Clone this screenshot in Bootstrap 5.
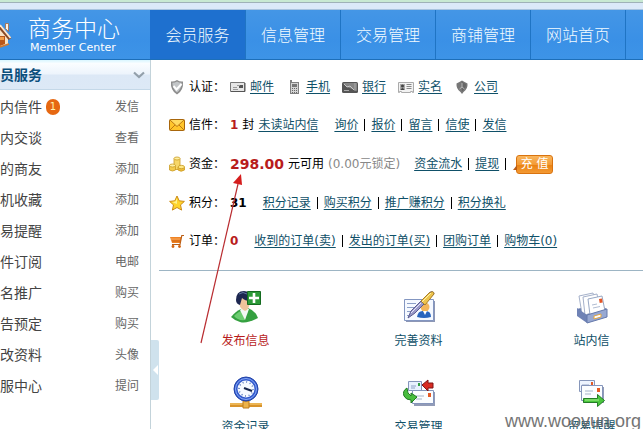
<!DOCTYPE html>
<html lang="zh-CN">
<head>
<meta charset="utf-8">
<meta name="viewport" content="width=device-width, initial-scale=1">
<title>商务中心</title>
<link rel="stylesheet" href="https://cdn.jsdelivr.net/npm/bootstrap@5.3.0/dist/css/bootstrap.min.css">
<style>
body{font-family:"DejaVu Sans","Noto Sans CJK SC",sans-serif;font-size:12px;line-height:18px;color:#000;background:#fff;height:100vh;overflow:hidden}
svg{display:block;flex:none}
.chrome-strip{height:10px;background:#dbe9f9;border-top:2px solid #c8e9d3;border-bottom:1px solid #a9c4df;box-shadow:inset 0 1px #9fb1b8}
.topbar{height:50px;background:linear-gradient(#4496e6,#3a90e6 60%,#3d94e7);border-bottom:1px solid #1d6fb9}
.brand{width:150px;color:#fff}
.brand:hover{color:#fff}
.brand-name{font-size:23px;line-height:26px;font-weight:300}
.brand-sub{font-size:11px;line-height:12px;padding-left:2px}
.topbar .nav-link{font-size:16px;line-height:24px;color:#f2fbff;width:95px;padding:2px 0 0;border-right:1px solid #1f74c4;display:flex;align-items:center;justify-content:center;font-weight:300}
.topbar .nav-link.active{width:96px;background:#1e70cf}
.side{width:151px;border-right:1px solid #c3d3da}
.side-head{height:30px;background:linear-gradient(#d9f6ff,#fafdff 12%,#edf4fc 48%,#dce8f6 52%,#dde9f6);border-bottom:1px solid #c4d8e8;color:#0b4f7c;font-size:14px;font-weight:700}
.side-head button{border:0;background:none;padding:0}
.side-list{padding-top:1px}
.side-item{height:31px;padding-right:11px}
.side-item a{color:#444;text-decoration:none;font-size:14px}
.side-item .act{color:#666;font-size:12px}
.count{background:#e66812;color:#fff3b0;font-size:10px;line-height:16px;width:14px;border-radius:7px;text-align:center;margin-left:4px}
.rail{width:8px}
.rail button{width:8px;height:60px;margin-top:280px;padding:0;border:0;background:#cfe2ed;border-radius:0 2px 2px 0}
.stats{height:210px;padding:8px 0 10px 10px}
.stat-label{width:41px;margin-left:4px}
.stats a,.tile{color:#0f5068}
.stats a{text-decoration:underline;text-underline-offset:2px}
.certs{gap:12px}
.bar{width:1px;height:12px;background:#000;margin:0 6px}
.num{color:#b81c1c;font-weight:700}
.sum{font-size:14px}
.locked{color:#888;margin-right:14px}
.recharge{position:relative;height:19px;width:37px;padding:0;border:1px solid #d9730f;border-radius:3px;background:linear-gradient(#f9b65d,#f39a35 50%,#ea800f 51%,#f39a35);color:#fff;font-size:12px;line-height:17px;margin-left:4px}
.recharge::before{content:"";position:absolute;left:-4px;bottom:3px;border-left:4px solid transparent;border-bottom:5px solid #b95b17}
.tiles{border-top:1px solid #9db5c4;padding-top:19px;display:grid;grid-template-columns:repeat(3,1fr);row-gap:26px;margin-right:-35px}
.tile{height:60px;text-decoration:none;display:flex;flex-direction:column;align-items:center;justify-content:space-between}
.tile svg{margin-bottom:8px}
.tile.hot{color:#b81c1c}
.pointer{position:absolute;left:196px;top:170px;pointer-events:none}
.watermark{position:absolute;right:2px;bottom:-3px;font:18px/22px "Liberation Sans",sans-serif;color:#666;opacity:.9}
</style>
<script src="https://cdn.jsdelivr.net/npm/bootstrap@5.3.0/dist/js/bootstrap.bundle.min.js"></script>
</head>
<body class="position-relative d-flex flex-column">
<div class="chrome-strip flex-shrink-0"></div>
<header class="topbar d-flex flex-shrink-0">
  <a href="#" class="brand d-flex align-items-center text-decoration-none flex-shrink-0">
    <svg width="12" height="26" viewBox="0 0 12 26"><path d="M0 4l8 11v7l-8 3z" fill="#f9e3c4"/><path d="M5.500 1.500h3v8l-3-3z" fill="#fbf3e8" stroke="#a9683c" stroke-width=".8"/><path d="M0 5l10 12" stroke="#8a4a24" stroke-width="3.500"/><path d="M0 3l10.500 13" stroke="#ffe9cf" stroke-width="1.800"/><path d="M0 14h5v8l-5 2z" fill="#b9571a"/><path d="M0 15h4v3H0z" fill="#f2a04a"/><path d="M0 25l9-3" stroke="#cc7a36" stroke-width="1.800"/></svg>
    <span class="d-flex flex-column ps-3"><span class="brand-name">商务中心</span><span class="brand-sub">Member Center</span></span>
  </a>
  <nav class="nav flex-nowrap">
    <a class="nav-link active" href="#" aria-current="page">会员服务</a>
    <a class="nav-link" href="#">信息管理</a>
    <a class="nav-link" href="#">交易管理</a>
    <a class="nav-link" href="#">商铺管理</a>
    <a class="nav-link" href="#">网站首页</a>
  </nav>
</header>
<div class="d-flex flex-grow-1">
  <aside class="side flex-shrink-0">
    <div class="side-head d-flex align-items-center justify-content-between pe-1"><span>员服务</span>
      <button type="button" aria-label="收起"><svg width="14" height="8" viewBox="0 0 14 8"><path d="M2 1.500l5 4.500 5-4.500" fill="none" stroke="#93a0ab" stroke-width="2.200"/></svg></button></div>
    <ul class="side-list list-unstyled m-0">
      <li class="side-item d-flex align-items-center"><a href="#">内信件</a><span class="count">1</span><a class="act ms-auto" href="#">发信</a></li>
      <li class="side-item d-flex align-items-center"><a href="#">内交谈</a><a class="act ms-auto" href="#">查看</a></li>
      <li class="side-item d-flex align-items-center"><a href="#">的商友</a><a class="act ms-auto" href="#">添加</a></li>
      <li class="side-item d-flex align-items-center"><a href="#">机收藏</a><a class="act ms-auto" href="#">添加</a></li>
      <li class="side-item d-flex align-items-center"><a href="#">易提醒</a><a class="act ms-auto" href="#">添加</a></li>
      <li class="side-item d-flex align-items-center"><a href="#">件订阅</a><a class="act ms-auto" href="#">电邮</a></li>
      <li class="side-item d-flex align-items-center"><a href="#">名推广</a><a class="act ms-auto" href="#">购买</a></li>
      <li class="side-item d-flex align-items-center"><a href="#">告预定</a><a class="act ms-auto" href="#">购买</a></li>
      <li class="side-item d-flex align-items-center"><a href="#">改资料</a><a class="act ms-auto" href="#">头像</a></li>
      <li class="side-item d-flex align-items-center"><a href="#">服中心</a><a class="act ms-auto" href="#">提问</a></li>
    </ul>
  </aside>
  <div class="rail flex-shrink-0"><button type="button" aria-label="收起侧栏"><svg width="8" height="10" viewBox="0 0 8 10"><path d="M7 0v10L2 5z" fill="#fff"/></svg></button></div>
  <main class="flex-grow-1 overflow-hidden">
    <section class="stats d-flex flex-column text-nowrap">
      <div class="flex-fill d-flex align-items-center">
        <svg width="16" height="16" viewBox="0 0 16 16"><path d="M8 1q3 2 6 1.500.8 9-6 13Q1.200 11.500 2 2.500 5 3 8 1z" fill="#8c8c8c"/><path d="M8 2.500q2 1.200 4.700 1.200Q12.500 10 8 13.500 3.500 10 3.300 3.700 6 3.700 8 2.500z" fill="#c2c5c7"/><path d="M4.500 7l3 3.500L12.500 5" fill="none" stroke="#fff" stroke-width="2"/></svg>
        <span class="stat-label">认证：</span>
        <div class="certs d-flex">
          <span class="d-flex align-items-center gap-1"><svg width="16" height="16" viewBox="0 0 16 16"><path d="M.5 3.500h14v9H.5z" fill="#e6e6e6" stroke="#777"/><path d="M1 12.500h14V4" fill="none" stroke="#555"/><path d="M3 8.500h4M3 10.500h5" stroke="#999"/><path d="M9 6h4v3H9z" fill="#555"/><path d="M7 6.500h3" stroke="#999"/></svg><a href="#">邮件</a></span>
          <span class="d-flex align-items-center gap-1"><svg width="16" height="16" viewBox="0 0 16 16"><path d="M4 1h2v2h7v12H4z" fill="#808080"/><path d="M5 4h7v10H5z" fill="#d4d4d4"/><path d="M6 5h5v3H6z" fill="#777"/><path d="M6 9.500h5M6 11.500h5M6 13.500h5" stroke="#666" stroke-dasharray="1 1"/></svg><a href="#">手机</a></span>
          <span class="d-flex align-items-center gap-1"><svg width="16" height="16" viewBox="0 0 16 16"><rect y="3" width="16" height="11" rx="1.500" fill="#555"/><path d="M1 4h14v8L5 8z" fill="#858585"/><path d="M2 5l3 3 3-1 4 4" fill="none" stroke="#c8c8c8"/><path d="M2 11.500h5M13 4v8" stroke="#aaa"/></svg><a href="#">银行</a></span>
          <span class="d-flex align-items-center gap-1"><svg width="16" height="16" viewBox="0 0 16 16"><path d="M.5 3.500h15v10h-1v-1h-2v1h-9v-1h-2v1h-1z" fill="#f2f2f2" stroke="#aaa"/><path d="M2 5h5v6H2z" fill="#aaa"/><circle cx="4.500" cy="7" r="1.500" fill="#444"/><path d="M2.500 11q2-4 4 0z" fill="#444"/><path d="M8.500 5.500h5M8.500 7.500h5M8.500 9.500h5" stroke="#888"/></svg><a href="#">实名</a></span>
          <span class="d-flex align-items-center gap-1"><svg width="16" height="16" viewBox="0 0 16 16"><path d="M8 1.500q2.500 1.500 5.500 3Q14 10 9.500 13L8 15l-1.500-2Q2 10 2.500 4.500 5.500 3 8 1.500z" fill="#777"/><path d="M8 3q2 1 4 2 0 4-3.500 7H8z" fill="#666"/><path d="M8 4v4L5.500 10M8 8l2.500 2" fill="none" stroke="#b5b5b5"/></svg><a href="#">公司</a></span>
        </div>
      </div>
      <div class="flex-fill d-flex align-items-center">
        <svg width="16" height="16" viewBox="0 0 16 16"><rect x=".5" y="2.500" width="15" height="11" rx="1" fill="#ffc52b" stroke="#a8660c"/><path d="M1 13l5.500-5.500M15 13L9.500 7.500" stroke="#bd780f"/><path d="M1 3l7 6.500L15 3" fill="#ffdb61" stroke="#bd780f"/></svg>
        <span class="stat-label">信件：</span>
        <span class="num">1</span><span class="ps-1 pe-1">封</span><a href="#" class="me-3">未读站内信</a>
        <a href="#">询价</a><i class="bar"></i><a href="#">报价</a><i class="bar"></i><a href="#">留言</a><i class="bar"></i><a href="#">信使</a><i class="bar"></i><a href="#">发信</a>
      </div>
      <div class="flex-fill d-flex align-items-center">
        <svg width="16" height="16" viewBox="0 0 16 16"><g stroke="#c99a25" stroke-width=".8"><path d="M5 2.500v11h6v-11z" fill="#f7d768"/><ellipse cx="8" cy="2.500" rx="3" ry="1.500" fill="#fff0a0"/><path d="M.5 9.500v4.500q3 2 6 0V9.500z" fill="#f4cb4c"/><ellipse cx="3.500" cy="9.500" rx="3" ry="1.500" fill="#fff0a0"/><path d="M9 11v3q3 2.500 6.500 0v-3z" fill="#efbd38"/><ellipse cx="12.300" cy="11" rx="3.200" ry="1.700" fill="#ffe884"/></g></svg>
        <span class="stat-label">资金：</span>
        <span class="num sum">298.00</span><span class="ps-1 pe-1">元可用</span><span class="locked">(0.00元锁定)</span>
        <a href="#">资金流水</a><i class="bar"></i><a href="#">提现</a><i class="bar"></i><button type="button" class="recharge">充 值</button>
      </div>
      <div class="flex-fill d-flex align-items-center">
        <svg width="16" height="16" viewBox="0 0 16 16"><path d="M8 1l2.200 4.800 5.200.6-3.900 3.500 1.100 5.200L8 12.500l-4.600 2.600 1.100-5.200L.6 6.400l5.200-.6z" fill="#ffd42b" stroke="#cc8a16"/><path d="M8 3v6L3 7l3.500-.5z" fill="#fff18c"/></svg>
        <span class="stat-label">积分：</span>
        <b class="me-3">31</b>
        <a href="#">积分记录</a><i class="bar"></i><a href="#">购买积分</a><i class="bar"></i><a href="#">推广赚积分</a><i class="bar"></i><a href="#">积分换礼</a>
      </div>
      <div class="flex-fill d-flex align-items-center">
        <svg width="16" height="16" viewBox="0 0 16 16"><path d="M1 4h11.500l-1 6H3z" fill="#ef8324"/><path d="M15 2.500h-2.200L11 11.500H3" fill="none" stroke="#b95e17" stroke-width="1.200"/><path d="M1.500 6h10" stroke="#ffd09a" stroke-dasharray="1 1"/><path d="M3 8h9" stroke="#cc6412"/><circle cx="4" cy="13.500" r="1.400" fill="#d2640f"/><circle cx="10.500" cy="13.500" r="1.400" fill="#d2640f"/></svg>
        <span class="stat-label">订单：</span>
        <span class="num me-3">0</span>
        <a href="#">收到的订单(卖)</a><i class="bar"></i><a href="#">发出的订单(买)</a><i class="bar"></i><a href="#">团购订单</a><i class="bar"></i><a href="#">购物车(0)</a>
      </div>
    </section>
    <section class="tiles">
      <a href="#" class="tile hot"><svg width="32" height="34" viewBox="0 0 32 34"><path d="M1 27q5-6 10-8l7-1q8 3 10 10-11 6-18 4-6-2-9-5z" fill="#35a040"/><path d="M4 26q5-5 8-5l3 9q-7 1-11-4z" fill="#6ccc70"/><path d="M10 20l5 10 4-11-5-2z" fill="#f3f7f4"/><path d="M9 9q-1 9 6 12 5-2 5-11l-6-3z" fill="#efc49b"/><path d="M6 10Q6 1 14 1q6 0 7 6l-1 4q-5 0-8-3l-2 7q-4-1-4-5z" fill="#1d2750"/><path d="M9 4q4-3 8 0" fill="none" stroke="#6077a2"/><path d="M17.500 1.500h13v13h-13z" fill="#2d9a38" stroke="#146b20"/><path d="M24 3v10M19 8h10" stroke="#fff" stroke-width="2.600"/></svg><span>发布信息</span></a>
      <a href="#" class="tile"><svg width="32" height="34" viewBox="0 0 32 34"><path d="M3 11h29v21H3z" fill="#8d97b5"/><path d="M1.500 9.500h29v21h-29z" fill="#f5f9ff" stroke="#8396c1"/><path d="M4 13.500h9M4 17.500h8M4 21.500h6M4 25.500h5" stroke="#8ca0c8"/><path d="M14 27q1-7 7-6 7-1 7 6-7 2-14 0z" fill="#2864bd"/><circle cx="22" cy="17" r="4.500" fill="#f3b65b"/><path d="M20 21l2 4 2-4z" fill="#fff"/><path d="M5 28l3-7L26 3q4-3 5 1L12 23z" fill="#9898c7" stroke="#5b5b91"/><path d="M18 11l8-8q5-3 5 1l-9 11z" fill="#edc44d" stroke="#a87d28"/><path d="M19 12L28 3" stroke="#fff3a8"/><path d="M8 23L18 13" stroke="#e3e4fa"/></svg><span>完善资料</span></a>
      <a href="#" class="tile"><svg width="32" height="34" viewBox="0 0 32 34"><path d="M1 19l20-5 10 5-20 8z" fill="#6377a8"/><path d="M3 6l14-3 4 15-15 6z" fill="#fff" stroke="#a5b1ca"/><path d="M7 7l14-3 3 16-15 5z" fill="#fff" stroke="#a5b1ca"/><path d="M12 9l14-3 3 15-15 4z" fill="#fff" stroke="#98a8c4"/><path d="M23 9l3-.5.700 4-3 .6z" fill="#e45525"/><path d="M16 15l5-1M17 18l7-1.500" stroke="#b1bdd2"/><path d="M1 18l10 7v8L1 26z" fill="#6f82b5"/><path d="M11 25l20-6v8l-20 6z" fill="#97a8d2" stroke="#6478aa"/><path d="M18 26l7-2v3l-7 2z" fill="#fff" stroke="#e2a540"/></svg><span>站内信</span></a>
      <a href="#" class="tile"><svg width="32" height="34" viewBox="0 0 32 34"><path d="M0 29h32" stroke="#d8932b" stroke-width="4"/><path d="M0 28h32" stroke="#ffd57d"/><path d="M13 25h6v7h-6z" fill="#edb34a" stroke="#bd7d21"/><circle cx="16" cy="13" r="12" fill="#3159cc" stroke="#2242a6"/><circle cx="16" cy="13" r="10.500" fill="none" stroke="#88a9f6"/><circle cx="16" cy="13" r="8.500" fill="#f5f9ff"/><circle cx="16" cy="13" r="7" fill="none" stroke="#5272b8" stroke-width="1.500" stroke-dasharray="1 2.660"/><path d="M14 12l8 3" stroke="#17264c" stroke-width="2"/></svg><span>资金记录</span></a>
      <a href="#" class="tile"><svg width="32" height="34" viewBox="0 0 32 34"><path d="M5.500 5.500h13v9h-13z" fill="#e8f1ff" stroke="#8595bb"/><path d="M8 10h5M8 12h4" stroke="#8ca0c5"/><path d="M15 7h2v3h-2z" fill="#31a044"/><path d="M11 16h21v14H11z" fill="#929bb7"/><path d="M9.500 14.500h21v13h-21z" fill="#fbfdff" stroke="#8595bb"/><path d="M13 20h8M13 23h6" stroke="#a7b4ca"/><path d="M25 17h3v4h-3z" fill="#e55b25"/><path d="M19 9l6-5v3h5v5h-5v3z" fill="#d82b22" stroke="#7e1515"/><path d="M4 12q-5 3-3 8 2 4 7 4v3l6-6-6-4v3q-4-2-4-8z" fill="#48bd3d" stroke="#217b23"/></svg><span>交易管理</span></a>
      <a href="#" class="tile"><svg width="32" height="34" viewBox="0 0 32 34"><path d="M3.500 4.500h15v11h-15z" fill="#edf4ff" stroke="#8696ba"/><path d="M6 9h7M6 11h5" stroke="#96a6c5"/><path d="M15 6h2v3h-2z" fill="#e55b25"/><path d="M7 11h21v16H7z" fill="#929bb7"/><path d="M5.500 9.500h21v15h-21z" fill="#fbfdff" stroke="#8595bb"/><path d="M9 15h8M9 18h6" stroke="#a7b4ca"/><path d="M21 12h3v4h-3z" fill="#e55b25"/><path d="M7.500 22.500h14v-4l7 6-7 6v-4h-14z" fill="#4ac63d" stroke="#247c27"/><path d="M9 24h14" stroke="#a5ee8c"/></svg><span>贸易提醒</span></a>
    </section>
  </main>
</div>
<svg class="pointer" width="60" height="180" viewBox="0 0 60 180" aria-hidden="true"><path d="M5 173L42 14" stroke="#b92c30" stroke-width="1.200"/><path d="M45 4L37 13l9 2z" fill="#d51d1d"/></svg>
<div class="watermark">www.wooyun.org</div>
</body>
</html>
